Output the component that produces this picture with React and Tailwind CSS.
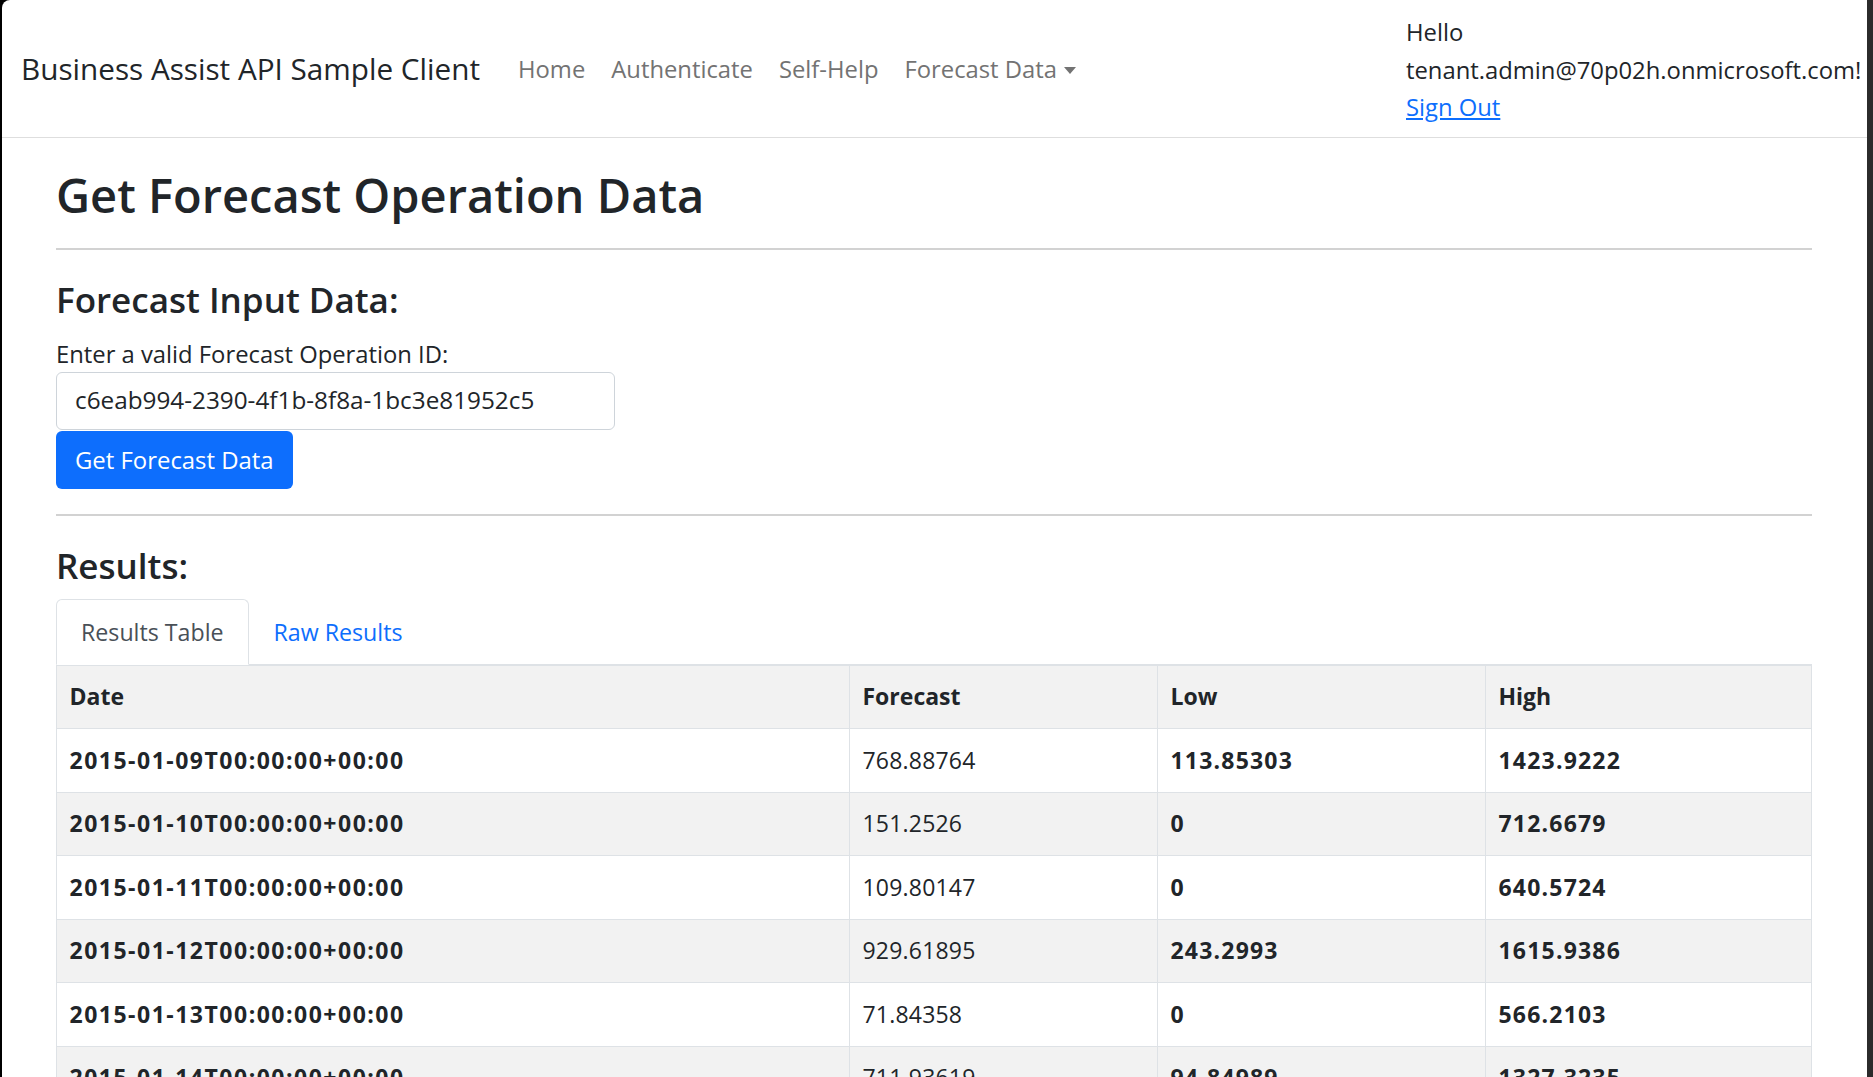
import React from "react";

const rows = [
  ["2015-01-09T00:00:00+00:00", "768.88764", "113.85303", "1423.9222"],
  ["2015-01-10T00:00:00+00:00", "151.2526", "0", "712.6679"],
  ["2015-01-11T00:00:00+00:00", "109.80147", "0", "640.5724"],
  ["2015-01-12T00:00:00+00:00", "929.61895", "243.2993", "1615.9386"],
  ["2015-01-13T00:00:00+00:00", "71.84358", "0", "566.2103"],
  ["2015-01-14T00:00:00+00:00", "711.93619", "94.84989", "1327.3235"],
  ["2015-01-15T00:00:00+00:00", "702.15822", "90.11034", "1314.2061"],
];

export default function App() {
  return (
    <div
      className="flex h-screen w-full overflow-hidden bg-black"
      style={{ fontFamily: '"Open Sans", "Noto Sans", sans-serif' }}
    >
      <div className="w-[2px] shrink-0" />
      <div className="min-w-0 flex-1 overflow-hidden rounded-tl-[8px] bg-white text-[#212529]">
        <nav className="flex h-[138px] items-center border-b border-[#dedede] pl-[19px]">
          <span className="mr-[25px] text-[29.7px] leading-[40px] text-[#212529]">
            Business Assist API Sample Client
          </span>
          <div className="mt-[2px] flex items-center text-[23.8px] leading-[37.5px] text-[#737373]">
            <a className="px-[13px]">Home</a>
            <a className="px-[13px]">Authenticate</a>
            <a className="px-[13px]">Self-Help</a>
            <a className="flex items-center px-[13px]">
              Forecast Data
              <span className="ml-[7px] mt-[2px] inline-block h-0 w-0 border-x-[6px] border-t-[7px] border-x-transparent border-t-[#737373]" />
            </a>
          </div>
          <div className="ml-auto w-[461px] self-start pt-[14px] text-[23.8px] leading-[37.5px] text-[#212529]">
            <div>Hello</div>
            <div className="whitespace-nowrap">tenant.admin@70p02h.onmicrosoft.com!</div>
            <a className="text-[#0d6efd] underline">Sign Out</a>
          </div>
        </nav>

        <main className="pl-[54px] pr-[55px]">
          <h1 className="mt-[27px] text-[47px] font-semibold leading-[60px] text-[#212529]">
            Get Forecast Operation Data
          </h1>
          <div className="mt-[23px] h-[2px] bg-[#d2d2d2]" />

          <h3 className="mt-[29px] text-[35px] font-semibold leading-[42px]">
            Forecast Input Data:
          </h3>
          <div className="mt-[15px] text-[23.8px] leading-[37.5px]">
            Enter a valid Forecast Operation ID:
          </div>
          <div className="-mt-[2px] flex h-[58px] w-[559px] items-center rounded-[6px] border border-[#ced4da] px-[18px] text-[24.3px]">
            c6eab994-2390-4f1b-8f8a-1bc3e81952c5
          </div>
          <button className="mt-[1px] flex h-[58px] items-center rounded-[6px] bg-[#0d6efd] px-[19px] text-[23.9px] text-white">
            Get Forecast Data
          </button>

          <div className="mt-[25px] h-[2px] bg-[#d2d2d2]" />

          <h3 className="mt-[29px] text-[35px] font-semibold leading-[42px]">Results:</h3>

          <div className="mt-[12px] flex h-[66px] border-b border-[#dee2e6]">
            <div className="-mb-px flex items-center rounded-t-[6px] border border-b-white border-[#dee2e6] bg-white px-[24px] pt-[2px] text-[23.2px] text-[#495057]">
              Results Table
            </div>
            <div className="flex items-center px-[25px] pt-[2px] text-[23.2px] text-[#0d6efd]">Raw Results</div>
          </div>

          <table className="w-full table-fixed border-collapse text-[23px] leading-[37.5px]">
            <colgroup>
              <col className="w-[793px]" />
              <col className="w-[308px]" />
              <col className="w-[328px]" />
              <col />
            </colgroup>
            <thead>
              <tr className="bg-[#f2f2f2]">
                <th className="border border-[#dee2e6] px-[12.5px] py-[12.5px] text-left font-bold">Date</th>
                <th className="border border-[#dee2e6] px-[12.5px] py-[12.5px] text-left font-bold">Forecast</th>
                <th className="border border-[#dee2e6] px-[12.5px] py-[12.5px] text-left font-bold">Low</th>
                <th className="border border-[#dee2e6] px-[12.5px] py-[12.5px] text-left font-bold">High</th>
              </tr>
            </thead>
            <tbody>
              {rows.map((r, i) => (
                <tr key={i} className={i % 2 === 1 ? "bg-[#f2f2f2]" : "bg-white"}>
                  <td className="border border-[#dee2e6] px-[12.5px] py-[12.5px] font-bold tracking-[1.5px]">{r[0]}</td>
                  <td className="border border-[#dee2e6] px-[12.5px] py-[12.5px] tracking-[0.2px]">{r[1]}</td>
                  <td className="border border-[#dee2e6] px-[12.5px] py-[12.5px] font-bold tracking-[1.2px]">{r[2]}</td>
                  <td className="border border-[#dee2e6] px-[12.5px] py-[12.5px] font-bold tracking-[1.2px]">{r[3]}</td>
                </tr>
              ))}
            </tbody>
          </table>
        </main>
      </div>
      <div className="w-[6px] shrink-0 bg-[#2b2b2b]" />
    </div>
  );
}
